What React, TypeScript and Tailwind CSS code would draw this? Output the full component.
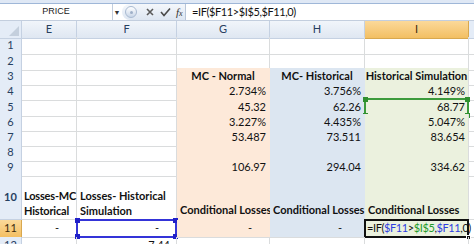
import type { ReactNode } from 'react'

const GRID = 'grid grid-cols-[22px_55px_100px_93px_95px_104px_1fr]'
const FONT = "font-['Lato','Liberation_Sans',sans-serif]"

const FILL = ['bg-[#fde9d9] border-r-[#fde9d9]', 'bg-[#dce6f1] border-r-[#dce6f1]', 'bg-[#ebf1de]']

type Row = { n: number; h: string; head?: string[]; vals?: string[] }

const ROWS: Row[] = [
  { n: 1, h: 'h-[16px]' },
  { n: 2, h: 'h-[15px]' },
  { n: 3, h: 'h-[15px]', head: ['MC - Normal', 'MC- Historical', 'Historical Simulation'] },
  { n: 4, h: 'h-[16px]', vals: ['2.734%', '3.756%', '4.149%'] },
  { n: 5, h: 'h-[15px]', vals: ['45.32', '62.26', '68.77'] },
  { n: 6, h: 'h-[15px]', vals: ['3.227%', '4.435%', '5.047%'] },
  { n: 7, h: 'h-[15px]', vals: ['53.487', '73.511', '83.654'] },
  { n: 8, h: 'h-[15px]' },
  { n: 9, h: 'h-[16px]', vals: ['106.97', '294.04', '334.62'] },
]

function Cell({ children, className = '' }: { children?: ReactNode; className?: string }) {
  return (
    <div className={`relative border-r border-b border-[#dadcdd] flex px-[3px] ${className}`}>
      {children}
    </div>
  )
}

function RowHead({ n, active }: { n: number; active?: boolean }) {
  return (
    <div
      className={`flex items-center justify-center border-r border-b text-[11px] ${
        active
          ? 'bg-gradient-to-b from-[#fbd999] to-[#f3bf62] border-[#d8a84f] text-[#3b2a0c]'
          : 'bg-[#e4ecf7] border-[#c5d1e2] text-[#27405f]'
      }`}
    >
      {n}
    </div>
  )
}

function Handles({ color }: { color: string }) {
  return (
    <>
      <span className={`absolute -left-[3px] -top-[3px] w-[5px] h-[5px] ${color}`} />
      <span className={`absolute -right-[3px] -top-[3px] w-[5px] h-[5px] ${color}`} />
      <span className={`absolute -left-[3px] -bottom-[3px] w-[5px] h-[5px] ${color}`} />
      <span className={`absolute -right-[3px] -bottom-[3px] w-[5px] h-[5px] ${color}`} />
    </>
  )
}

export default function App() {
  return (
    <div className={`w-[474px] h-[244px] overflow-hidden bg-white text-[11px] text-[#111] ${FONT}`}>
      {/* Formula bar */}
      <div className="h-[3px] bg-[#dfe8f5]" />
      <div className="h-[18px] flex items-center border-t border-[#9fb7d8] border-b border-b-[#c3cede] bg-white">
        <div className="w-[113px] shrink-0 h-full flex items-center justify-center border-r border-[#c3cede] text-[9px] text-[#222] font-['Liberation_Sans',sans-serif]">
          <span className="block w-full text-center">PRICE</span>
        </div>
        <span className="w-[8px] shrink-0 text-[7px] text-[#333] text-center">▼</span>
        <div className="ml-[1px] shrink-0 h-full flex items-center w-[64px] rounded-l-full bg-gradient-to-b from-[#f4f7fb] to-[#dde6f2] border-r border-[#b9c6d8]">
          <span className="ml-[3px] w-[12px] h-[12px] rounded-full border border-[#a9bad1] bg-gradient-to-b from-[#ffffff] to-[#c9d6e8] flex items-center justify-center">
            <span className="w-[3px] h-[3px] rounded-full bg-[#9fb0c8]" />
          </span>
          <svg width="10" height="10" viewBox="0 0 10 10" className="ml-[8px]">
            <path d="M2 2 L8 8 M8 2 L2 8" stroke="#5a5a5a" strokeWidth="1.6" />
          </svg>
          <svg width="11" height="10" viewBox="0 0 11 10" className="ml-[5px]">
            <path d="M1 5 L4 8.5 L10 1.5" stroke="#4a4a4a" strokeWidth="1.6" fill="none" />
          </svg>
          <span className="ml-[5px] italic font-['Liberation_Serif',serif] text-[11px] text-[#333]">
            f<span className="text-[8px]">x</span>
          </span>
        </div>
        <div className="pl-[6px] text-[11px] tracking-[-0.4px] text-[#111]">=IF($F11&gt;$I$5,$F11,0)</div>
      </div>

      {/* Column headers */}
      <div className={`${GRID} h-[16px] text-[11px]`}>
        <div className="relative bg-[#e4ecf7] border-r border-b border-[#c5d1e2]">
          <svg width="10" height="10" viewBox="0 0 10 10" className="absolute right-[2px] bottom-[2px]">
            <path d="M10 0 L10 10 L0 10 Z" fill="#c4cfdd" />
          </svg>
        </div>
        {['E', 'F', 'G', 'H'].map((c) => (
          <div key={c} className="flex items-center justify-center bg-gradient-to-b from-[#f1f5fa] to-[#dfe7f2] border-r border-b border-[#c5d1e2] text-[#27405f]">
            {c}
          </div>
        ))}
        <div className="flex items-center justify-center bg-gradient-to-b from-[#fbd999] to-[#f3bf62] border-r border-b border-[#d8a84f] text-[#3b2a0c]">
          I
        </div>
        <div className="bg-[#e4ecf7] border-b border-[#c5d1e2]" />
      </div>

      {/* Rows 1-9 */}
      {ROWS.map((r) => {
        const filled = r.n >= 3
        return (
          <div key={r.n} className={`${GRID} ${r.h}`}>
            <RowHead n={r.n} />
            <Cell />
            <Cell />
            {[0, 1, 2].map((k) => (
              <Cell
                key={k}
                className={`items-center whitespace-nowrap ${filled ? `${FILL[k]} border-b-transparent` : ''} ${
                  r.head ? 'justify-center font-bold' : 'justify-end'
                }`}
              >
                {r.head?.[k] ?? r.vals?.[k]}
                {r.n === 5 && k === 2 && (
                  <span className="absolute -left-px -top-px -right-px -bottom-px border-2 border-[#3c9b3c]">
                    <Handles color="bg-[#2f8f2f]" />
                  </span>
                )}
              </Cell>
            ))}
            <div className="border-b border-[#dadcdd]" />
          </div>
        )
      })}

      {/* Row 10 */}
      <div className={`${GRID} h-[45px] font-bold`}>
        <RowHead n={10} />
        <Cell className="items-end pb-[1px] pl-[2px]">
          <div className="leading-[15px] whitespace-nowrap tracking-[-0.2px]">
            Losses-MC
            <br />
            Historical
          </div>
        </Cell>
        <Cell className="items-end pb-[1px]">
          <div className="leading-[15px] whitespace-nowrap">
            Losses- Historical
            <br />
            Simulation
          </div>
        </Cell>
        <Cell className={`items-end pb-[1px] whitespace-nowrap border-b-transparent ${FILL[0]}`}>Conditional Losses</Cell>
        <Cell className={`items-end pb-[1px] whitespace-nowrap border-b-transparent ${FILL[1]}`}>Conditional Losses</Cell>
        <Cell className={`items-end pb-[1px] whitespace-nowrap border-b-transparent ${FILL[2]}`}>Conditional Losses</Cell>
        <div className="border-b border-[#dadcdd]" />
      </div>

      {/* Row 11 */}
      <div className={`${GRID} h-[17px]`}>
        <RowHead n={11} active />
        <Cell className="items-center justify-end pr-[17px]">-</Cell>
        <Cell className="items-center justify-end pr-[17px]">
          -
          <span className="absolute -left-px -top-px -right-px -bottom-px border-2 border-[#3434d8]">
            <Handles color="bg-[#2020c8]" />
          </span>
        </Cell>
        <Cell className={`items-center justify-end pr-[17px] ${FILL[0]}`}>-</Cell>
        <Cell className={`items-center justify-end pr-[22px] ${FILL[1]}`}>-</Cell>
        <Cell className={`items-center whitespace-nowrap pl-[2px] ${FILL[2]}`}>
          <span className="tracking-[-0.4px]">
            =IF(<span className="text-[#2f3fe0]">$F11</span>&gt;<span className="text-[#1e9a2a]">$I$5</span>,
            <span className="text-[#2f3fe0]">$F11</span>,0)
          </span>
          <span className="absolute -left-px -top-px -right-px -bottom-px border-2 border-[#111]">
            <span className="absolute -right-[4px] -bottom-[4px] w-[5px] h-[5px] bg-[#111] border border-white" />
          </span>
        </Cell>
        <div className="border-b border-[#dadcdd]" />
      </div>

      {/* Row 12 */}
      <div className={`${GRID} h-[15px]`}>
        <RowHead n={12} />
        <Cell />
        <Cell className="items-center justify-end pr-[6px]">7.44</Cell>
        <Cell />
        <Cell />
        <Cell />
        <div />
      </div>
    </div>
  )
}
